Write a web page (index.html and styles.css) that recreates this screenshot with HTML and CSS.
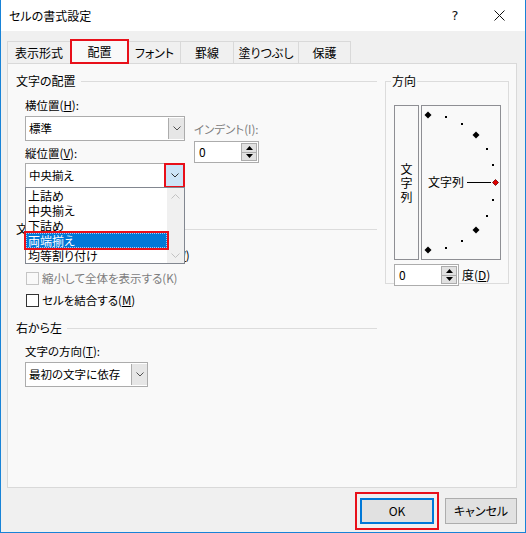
FILE: index.html
```html
<!DOCTYPE html>
<html lang="ja">
<head>
<meta charset="utf-8">
<title>セルの書式設定</title>
<link rel="stylesheet" href="styles.css">
</head>
<body>
<div class="window">
  <div class="titlebar">
    <span class="title">セルの書式設定</span>
    <span class="help">?</span>
    <span class="close"><svg width="11" height="11" viewBox="0 0 11 11"><path d="M0.5 0.5L10.5 10.5M10.5 0.5L0.5 10.5" stroke="#111" stroke-width="1" fill="none"/></svg></span>
  </div>

  <div class="tabs">
    <div class="tab t1">表示形式</div>
    <div class="tab active">配置</div>
    <div class="tab t3">フォント</div>
    <div class="tab t4">罫線</div>
    <div class="tab t5">塗りつぶし</div>
    <div class="tab t6">保護</div>
  </div>

  <div class="panel">
    <div class="left">
      <div class="ghead"><span>文字の配置</span><i class="gline"></i></div>
      <div class="align-area">
        <div class="col-a">
          <div class="lbl lbl-h">横位置(<u>H</u>):</div>
          <div class="combo">
            <span class="combo-text">標準</span>
            <span class="combo-btn"><svg width="8" height="5" viewBox="0 0 8 5"><path d="M0.5 0.5L4 4L7.5 0.5" stroke="#505050" fill="none"/></svg></span>
          </div>
          <div class="lbl lbl-v">縦位置(<u>V</u>):</div>
          <div class="combo combo-v">
            <span class="combo-text">中央揃え</span>
            <span class="combo-btn open"><svg width="8" height="5" viewBox="0 0 8 5"><path d="M0.5 0.5L4 4L7.5 0.5" stroke="#303030" fill="none"/></svg></span>
            <div class="droplist">
              <div class="items">
                <div class="item">上詰め</div>
                <div class="item">中央揃え</div>
                <div class="item">下詰め</div>
                <div class="item sel">両端揃え</div>
                <div class="item">均等割り付け</div>
              </div>
              <div class="vscroll">
                <svg width="9" height="5" viewBox="0 0 9 5"><path d="M0.5 4.5L4.5 0.5L8.5 4.5" stroke="#c2c2c2" fill="none"/></svg>
                <svg width="9" height="5" viewBox="0 0 9 5"><path d="M0.5 0.5L4.5 4.5L8.5 0.5" stroke="#c2c2c2" fill="none"/></svg>
              </div>
            </div>
          </div>
        </div>
        <div class="col-b">
          <div class="lbl disabled">インデント(I):</div>
          <div class="spin">
            <span class="spin-val">0</span>
            <span class="spin-btns">
              <span class="sb"><svg width="7" height="4" viewBox="0 0 7 4"><path d="M0 4L3.5 0L7 4Z" fill="#000"/></svg></span>
              <span class="sb"><svg width="7" height="4" viewBox="0 0 7 4"><path d="M0 0L3.5 4L7 0Z" fill="#000"/></svg></span>
            </span>
          </div>
        </div>
      </div>

      <div class="ghead ctrl-head"><span>文字の制御</span><i class="gline"></i></div>
      <div class="chk c1"><span class="box"></span><span>折り返して全体を表示する(<u>W</u>)</span></div>
      <div class="chk c2 disabled"><span class="box"></span><span>縮小して全体を表示する(K)</span></div>
      <div class="chk c3"><span class="box"></span><span>セルを結合する(<u>M</u>)</span></div>

      <div class="ghead rtl-head"><span>右から左</span><i class="gline"></i></div>
      <div class="lbl lbl-dir">文字の方向(<u>T</u>):</div>
      <div class="combo combo-dir">
        <span class="combo-text">最初の文字に依存</span>
        <span class="combo-btn"><svg width="8" height="5" viewBox="0 0 8 5"><path d="M0.5 0.5L4 4L7.5 0.5" stroke="#505050" fill="none"/></svg></span>
      </div>
    </div>

    <div class="ogroup">
      <div class="olegend">方向</div>
      <div class="obox-row">
        <div class="vtext"><span>文</span><span>字</span><span>列</span></div>
        <div class="dial">
          <svg class="dial-svg" width="78" height="153" viewBox="0 0 78 153">
            <g fill="#000">
              <path d="M6 5.5L9.5 9L6 12.5L2.5 9Z"/>
              <path d="M54 25.5L57.5 29L54 32.5L50.5 29Z"/>
              <path d="M54 120.5L57.5 124L54 127.5L50.5 124Z"/>
              <path d="M6 140.5L9.5 144L6 147.5L2.5 144Z"/>
              <rect x="23" y="10" width="2" height="2"/>
              <rect x="39" y="17" width="2" height="2"/>
              <rect x="64" y="42" width="2" height="2"/>
              <rect x="70" y="58" width="2" height="2"/>
              <rect x="70" y="93" width="2" height="2"/>
              <rect x="64" y="109" width="2" height="2"/>
              <rect x="39" y="134" width="2" height="2"/>
              <rect x="23" y="141" width="2" height="2"/>
            </g>
            <path d="M45 76.5H69" stroke="#000" stroke-width="1"/>
            <path d="M73.5 73.5L76.5 76.5L73.5 79.5L70.5 76.5Z" fill="#e00000" stroke="#6a0000" stroke-width="0.8"/>
          </svg>
          <span class="dial-text">文字列</span>
        </div>
      </div>
      <div class="deg-row">
        <div class="spin">
          <span class="spin-val">0</span>
          <span class="spin-btns">
            <span class="sb"><svg width="7" height="4" viewBox="0 0 7 4"><path d="M0 4L3.5 0L7 4Z" fill="#000"/></svg></span>
            <span class="sb"><svg width="7" height="4" viewBox="0 0 7 4"><path d="M0 0L3.5 4L7 0Z" fill="#000"/></svg></span>
          </span>
        </div>
        <span class="deg-lbl">度(<u>D</u>)</span>
      </div>
    </div>
  </div>

  <div class="footer">
    <div class="ok-ring"><div class="btn ok">OK</div></div>
    <div class="btn cancel">キャンセル</div>
  </div>
</div>
</body>
</html>
```

FILE: styles.css
```css
* { box-sizing: border-box; }
html, body { margin: 0; padding: 0; }
body {
  width: 526px;
  height: 533px;
  overflow: hidden;
  background: #f0f0f0;
  font-family: "Noto Sans CJK JP", "Noto Sans", sans-serif;
  font-size: 11.5px;
  color: #000;
  font-feature-settings: "palt";
}
u { text-decoration: underline; text-underline-offset: 1px; }

.window {
  width: 526px;
  height: 533px;
  border: 1px solid #1883d7;
  border-top: none;
  background: #f0f0f0;
  display: flex;
  flex-direction: column;
}

/* title bar */
.titlebar {
  flex: none;
  height: 31px;
  background: #fff;
  display: flex;
  align-items: center;
  padding-left: 8px;
}
.title { flex: 1; line-height: 16px; font-size: 12px; }
.help {
  width: 44px;
  text-align: center;
  font-family: "DejaVu Sans", sans-serif;
  font-size: 13px;
  line-height: 16px;
  color: #111;
}
.close {
  width: 45px;
  height: 31px;
  margin-right: 3px;
  display: flex;
  align-items: center;
  justify-content: center;
}

/* tabs */
.tabs {
  flex: none;
  height: 32px;
  display: flex;
  align-items: flex-end;
  padding-left: 6px;
  position: relative;
  z-index: 2;
}
.tab {
  height: 22px;
  border-top: 1px solid #d9d9d9;
  border-left: 1px solid #d9d9d9;
  display: flex;
  align-items: center;
  justify-content: center;
  line-height: 16px;
  background: #f0f0f0;
  padding-top: 1px;
  font-size: 12px;
}
.t1 { width: 63px; }
.t3 { width: 51px; border-left: none; }
.t4 { width: 53px; }
.t5 { width: 65px; }
.t6 { width: 53px; border-right: 1px solid #d9d9d9; }
.tab.active {
  width: 59px;
  height: 25px;
  margin-bottom: -1px;
  border: 2px solid #e8101a;
  background: #f9f9f9;
  padding-top: 0;
}

/* panel */
.panel {
  flex: none;
  margin-left: 6px;
  width: 510px;
  height: 425px;
  border: 1px solid #d9d9d9;
  background: #f9f9f9;
  display: flex;
  align-items: flex-start;
}
.left {
  margin-left: 8px;
  width: 361px;
}
.ghead {
  display: flex;
  align-items: center;
  height: 16px;
  line-height: 16px;
  margin-top: 9px;
  font-size: 12px;
}
.gline {
  flex: 1;
  height: 1px;
  background: #dcdcdc;
  margin-left: 5px;
}
.lbl { line-height: 16px; height: 16px; }
.disabled { color: #7d7d7d; }

.align-area {
  display: flex;
  align-items: flex-start;
  padding-left: 9px;
}
.col-a { width: 160px; }
.lbl-h { margin-top: 8px; }
.lbl-v { margin-top: 4px; }

.combo {
  position: relative;
  display: flex;
  align-items: stretch;
  height: 25px;
  border: 1px solid #acacac;
  background: #fff;
  margin-top: 3px;
}
.combo-v { margin-top: 2px; z-index: 3; }
.combo-text {
  flex: 1;
  padding-left: 3px;
  line-height: 23px;
  white-space: nowrap;
}
.combo-btn {
  width: 16px;
  background: #e6e6e6;
  border-left: 1px solid #acacac;
  display: flex;
  align-items: center;
  justify-content: center;
  margin: 1px 0;
}
.combo-btn.open {
  width: 21px;
  margin: -1px -1px -1px 0;
  border: 2px solid #e8101a;
  background: #cce4f7;
}

.droplist {
  position: absolute;
  left: -1px;
  top: 100%;
  width: 160px;
  height: 77px;
  border: 1px solid #828790;
  background: #fff;
  display: flex;
}
.items { width: 141px; }
.item {
  height: 15px;
  line-height: 15px;
  padding-left: 2px;
  white-space: nowrap;
  font-size: 12px;
}
.item.sel {
  position: relative;
  background: #0078d7;
  color: #fff;
  outline: 2px solid #e8101a;
  outline-offset: 0;
}
.item.sel::after {
  content: "";
  position: absolute;
  inset: 0;
  border: 1px dotted #a9cdee;
}
.vscroll {
  flex: 1;
  background: #f0f0f0;
  display: flex;
  flex-direction: column;
  align-items: center;
  justify-content: space-between;
  padding: 6px 0 5px;
}

.col-b { margin-left: 9px; }
.col-b .lbl { margin-top: 32px; }

.spin {
  display: flex;
  width: 65px;
  height: 22px;
  border: 1px solid #acacac;
  background: #fff;
  margin-top: 4px;
}
.spin-val {
  flex: 1;
  padding-left: 4px;
  line-height: 20px;
  font-size: 12px;
}
.spin-btns {
  width: 16px;
  display: flex;
  flex-direction: column;
  margin: 1px 1px 1px 0;
}
.sb {
  flex: 1;
  border: 1px solid #acacac;
  background: #e1e1e1;
  display: flex;
  align-items: center;
  justify-content: center;
}
.sb + .sb { border-top: none; }

.ctrl-head { margin-top: 33px; }

.chk {
  display: flex;
  align-items: center;
  height: 16px;
  line-height: 16px;
  padding-left: 10px;
  white-space: nowrap;
}
.chk .box {
  width: 13px;
  height: 13px;
  border: 1px solid #333;
  background: #fff;
  margin-right: 3px;
}
.chk.disabled .box { border-color: #c5c5c5; background: #f9f9f9; }
.c1 { margin-top: 10px; }
.c2 { margin-top: 7px; }
.c3 { margin-top: 6px; }

.rtl-head { margin-top: 12px; }
.lbl-dir { margin-top: 7px; padding-left: 9px; }
.combo-dir { width: 123px; margin-left: 9px; margin-top: 3px; }

/* orientation group */
.ogroup {
  margin-left: 8px;
  margin-top: 17px;
  width: 124px;
  height: 203px;
  border: 1px solid #dcdcdc;
}
.olegend {
  display: inline-block;
  margin: -9px 0 0 5px;
  padding: 0 1px;
  height: 16px;
  line-height: 16px;
  background: #f9f9f9;
  vertical-align: top;
  font-size: 12px;
}
.obox-row {
  display: flex;
  margin-top: 7px;
  padding-left: 8px;
}
.vtext {
  width: 25px;
  height: 155px;
  border: 1px solid #8e8f94;
  display: flex;
  flex-direction: column;
  align-items: center;
  justify-content: center;
  line-height: 14px;
  font-size: 12px;
}
.dial {
  position: relative;
  width: 80px;
  height: 155px;
  margin-left: 2px;
  border: 1px solid #8e8f94;
}
.dial-svg { display: block; }
.dial-text {
  position: absolute;
  left: 6px;
  top: 68px;
  line-height: 16px;
  font-size: 12px;
}
.deg-row {
  display: flex;
  align-items: center;
  padding-left: 8px;
  margin-top: 4px;
}
.deg-row .spin { margin-top: 0; }
.deg-lbl { margin-left: 3px; line-height: 16px; font-size: 12px; }

/* footer */
.footer {
  flex: none;
  display: flex;
  justify-content: flex-end;
  align-items: flex-start;
  padding-right: 8px;
  margin-top: 4px;
}
.ok-ring {
  border: 2px solid #e8101a;
  padding: 4px 3px;
}
.btn {
  height: 26px;
  background: #e1e1e1;
  display: flex;
  align-items: center;
  justify-content: center;
  line-height: 16px;
  font-size: 12px;
}
.btn.ok {
  width: 74px;
  border: 2px solid #0078d7;
}
.btn.cancel {
  width: 72px;
  margin-left: 6px;
  margin-top: 6px;
  border: 1px solid #adadad;
}
```
